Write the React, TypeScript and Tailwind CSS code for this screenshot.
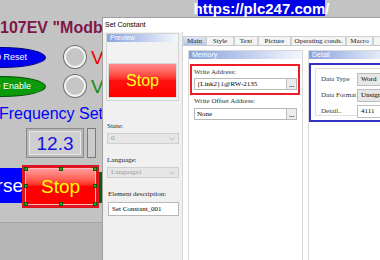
import React from 'react'

// HMI editor screen: a panel canvas behind the "Set Constant" dialog

const tabs = ['Main', 'Style', 'Text', 'Picture', 'Operating conds.', 'Macro', 'S']
const tabWidths = [23, 28, 24, 33, 55, 27, 20]

function Handle({ className }: { className: string }) {
  return <div className={`absolute w-[4px] h-[4px] bg-[#1db31d] border border-[#0a5a0a] ${className}`} />
}

function HmiScreen() {
  return (
    <div className="absolute inset-0">
      {/* lower strip of the panel */}
      <div className="absolute left-0 right-0 top-[222px] bottom-0 bg-[#b6b6b6] border-t border-[#a4a4a4]" />

      {/* title text */}
      <div className="absolute left-[0px] top-[20px] text-[16px] leading-none font-bold text-[#7e1747] whitespace-nowrap">
        107EV "Modbus
      </div>

      {/* lamps */}
      <div className="absolute left-[-42px] top-[47px] w-[88px] h-[21px] rounded-[50%] bg-[#0000f0] border border-[#00007a] flex items-center justify-end pr-[18px] text-[9px] text-white">
        0 Reset
      </div>
      <div className="absolute left-[-42px] top-[76px] w-[88px] h-[21px] rounded-[50%] bg-[#0a9a0a] border border-[#045004] flex items-center justify-end pr-[14px] text-[9px] text-white">
        e Enable
      </div>
      <div className="absolute left-[64px] top-[46px] w-[22px] h-[22px] rounded-full bg-[#c6c6c6] border-2 border-[#f2f2f2] shadow-[0_0_0_1px_#707070]" />
      <div className="absolute left-[64px] top-[75px] w-[22px] h-[22px] rounded-full bg-[#c6c6c6] border-2 border-[#f2f2f2] shadow-[0_0_0_1px_#707070]" />
      <div className="absolute left-[91px] top-[48px] text-[19px] leading-none text-[#f00000]">V</div>
      <div className="absolute left-[91px] top-[77px] text-[19px] leading-none text-[#138c13]">V</div>

      {/* frequency setting */}
      <div className="absolute left-[-1px] top-[106px] text-[16px] leading-none text-[#0000ff] whitespace-nowrap">
        Frequency Setting
      </div>
      <div className="absolute left-[26px] top-[128px] w-[58px] h-[30px] border border-[#8a8a8a] bg-[#b9b9b9] p-[2px]">
        <div className="w-full h-full bg-[#cfcfcf] border border-[#e8e8e8] flex items-center justify-center text-[19px] leading-none text-[#1414e0]">
          12.3
        </div>
      </div>
      <div className="absolute left-[87px] top-[128px] w-[9px] h-[30px] bg-[#cacaca] border border-[#7a7a7a]" />

      {/* reverse / stop buttons */}
      <div className="absolute left-[-40px] top-[168px] w-[64px] h-[35px] bg-[#0000ff] flex items-center justify-end pr-[1px] text-[19px] text-white leading-none">
        Reverse
      </div>
      <div className="absolute left-[98px] top-[172px] w-[4px] h-[31px] bg-[#0b5e0b]" />
      <div className="absolute left-[22px] top-[165px] w-[77px] h-[43px] border-[3px] border-[#e0141e] bg-[#e0141e]">
        <div className="relative w-full h-full bg-gradient-to-b from-[#ff9a9a] via-[#ff0000] to-[#ff0000] border border-[#f6c0c0] flex items-center justify-center text-[19px] leading-none text-[#ffff00]">
          Stop
          <Handle className="left-[-2px] top-[-2px]" />
          <Handle className="left-[33px] top-[-2px]" />
          <Handle className="right-[-2px] top-[-2px]" />
          <Handle className="left-[-2px] top-[15px]" />
          <Handle className="right-[-2px] top-[15px]" />
          <Handle className="left-[-2px] bottom-[-2px]" />
          <Handle className="left-[33px] bottom-[-2px]" />
          <Handle className="right-[-2px] bottom-[-2px]" />
        </div>
      </div>
    </div>
  )
}

function GroupHeader({ title }: { title: string }) {
  return (
    <div className="h-[8px] bg-gradient-to-r from-[#8aa3dd] to-[#f4f6fc] text-[7px] leading-[8px] text-white pl-[3px] font-['Liberation_Sans',Arial,sans-serif]">
      {title}
    </div>
  )
}

function Combo({ value }: { value: string }) {
  return (
    <div className="h-[11px] bg-[#e6e6e6] border border-[#cfcfcf] flex items-center justify-between px-[3px] text-[7px] text-[#9a9a9a]">
      <span>{value}</span>
      <svg width="6" height="4" viewBox="0 0 6 4" fill="none" stroke="#b0b0b0" strokeWidth="0.8">
        <path d="M0.5 0.5L3 3L5.5 0.5" />
      </svg>
    </div>
  )
}

function AddressInput({ value }: { value: string }) {
  return (
    <div className="h-[12px] w-[103px] bg-white border border-[#b8b8b8] flex items-center">
      <span className="flex-1 pl-[2px] text-[7px] text-black whitespace-nowrap">{value}</span>
      <div className="w-[10px] h-[10px] bg-[#ececec] border-l border-[#c0c0c0] flex items-end justify-center text-[7px] leading-[8px] font-bold text-black">
        ...
      </div>
    </div>
  )
}

function DetailRow({ label, value, input }: { label: string; value: string; input?: boolean }) {
  return (
    <div className="flex items-center h-[13px]">
      <span className="w-[41px] pl-[5px] text-[7px] text-[#333]">{label}</span>
      <div
        className={`flex-1 h-[13px] border border-[#bdbdbd] flex items-center pl-[3px] text-[7px] text-black ${
          input ? 'bg-white' : 'bg-[#e6e6e6]'
        }`}
      >
        {value}
      </div>
    </div>
  )
}

function SetConstantDialog() {
  return (
    <div className="absolute left-[102px] top-[17px] w-[290px] h-[250px] bg-white border-l border-t border-[#a0a0a0] flex flex-col font-['Liberation_Serif','Times_New_Roman',serif]">
      {/* title bar */}
      <div className="h-[14px] flex items-center pl-[2px] text-[7px] text-black font-['Liberation_Sans',Arial,sans-serif]">
        Set Constant
      </div>

      <div className="flex flex-1">
        {/* left column: preview + state */}
        <div className="w-[80px] shrink-0 bg-[#f0f0f0] border-r border-[#d4d4d4] px-[3px] pt-[1px] flex flex-col">
          <div className="h-[68px] border border-[#d4d4d4] bg-[#f2f2f2] flex flex-col">
            <GroupHeader title="Preview" />
            <div className="flex-1 flex items-end px-[1px] pb-[2px]">
              <div className="w-full h-[35px] bg-gradient-to-b from-[#ff8a8a] via-[#ff1010] to-[#ff0000] border border-[#d8d8d8] flex items-center justify-center text-[16px] leading-none text-[#ffff20] font-['Liberation_Sans',Arial,sans-serif]">
                Stop
              </div>
            </div>
          </div>

          <div className="mt-[21px] text-[7px] leading-[9px] text-[#222] pl-[1px]">State:</div>
          <div className="mt-[2px] pl-[1px]">
            <Combo value="0" />
          </div>
          <div className="mt-[12px] text-[7px] leading-[9px] text-[#222] pl-[1px]">Language:</div>
          <div className="mt-[2px] pl-[1px]">
            <Combo value="Language1" />
          </div>
          <div className="mt-[12px] text-[7px] leading-[9px] text-[#222] pl-[2px]">Element description:</div>
          <div className="mt-[3px] ml-[2px] h-[14px] bg-white border border-[#b8b8b8] flex items-center pl-[3px] text-[7px] text-black">
            Set Constant_001
          </div>
        </div>

        {/* right: tabs and page */}
        <div className="flex-1 flex flex-col pt-[4px]">
          <div className="flex h-[10px] border-b border-[#c8c8c8]">
            {tabs.map((t, i) => (
              <div
                key={t}
                style={{ width: tabWidths[i] }}
                className={`shrink-0 border border-b-0 border-[#d0d0d0] flex items-center justify-center text-[7px] leading-none text-[#222] ${
                  i === 0 ? 'bg-gradient-to-b from-[#dfe6f6] to-[#b6c6ea]' : 'bg-[#f4f4f4]'
                }`}
              >
                {t}
              </div>
            ))}
          </div>

          <div className="flex gap-[5px] pl-[5px] pt-[4px] flex-1">
            {/* Memory */}
            <div className="w-[115px] shrink-0 border border-[#d8d8d8] flex flex-col">
              <GroupHeader title="Memory" />
              <div className="mt-[5px] ml-[1px] w-[110px] h-[31px] border-2 border-[#ee1c24] px-[2px] pt-[1px]">
                <div className="text-[7px] leading-[10px] text-[#333]">Write Address:</div>
                <div className="mt-[1px]">
                  <AddressInput value="{Link2}1@RW-2135" />
                </div>
              </div>
              <div className="mt-[1px] pl-[5px] text-[7px] leading-[10px] text-[#333]">Write Offset Address:</div>
              <div className="mt-[2px] pl-[5px]">
                <AddressInput value="None" />
              </div>
            </div>

            {/* Detail */}
            <div className="flex-1 border border-[#d8d8d8] flex flex-col">
              <GroupHeader title="Detail" />
              <div className="mt-[4px] h-[59px] border-2 border-[#3232c4] pl-[4px] pt-[3px]">
                <div className="h-[48px] border border-[#e0e0e0] border-r-0 pt-[4px] flex flex-col gap-[3px]">
                  <DetailRow label="Data Type" value="Word" />
                  <DetailRow label="Data Format" value="Unsigned" />
                  <DetailRow label="Detail.." value="4111" input />
                </div>
              </div>
            </div>
          </div>
        </div>
      </div>
    </div>
  )
}

function UrlBanner() {
  return (
    <div className="absolute left-[198px] top-0 w-[127px] h-[16px] bg-[#0000e6] flex items-center justify-center text-[15px] leading-none font-bold text-white font-['Liberation_Sans',Arial,sans-serif] z-10">
      https://plc247.com/
    </div>
  )
}

export default function App() {
  return (
    <div className="relative w-[380px] h-[260px] overflow-hidden bg-[#c3c3c3] font-['Liberation_Sans',Arial,sans-serif]">
      <HmiScreen />
      <SetConstantDialog />
      <UrlBanner />
    </div>
  )
}
